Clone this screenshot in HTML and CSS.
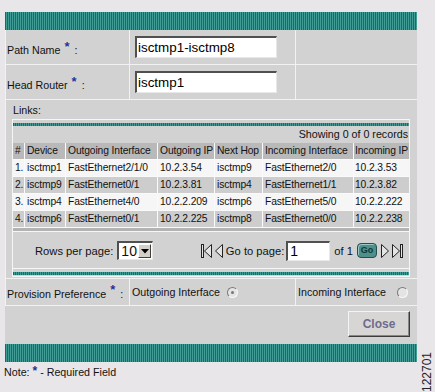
FILE: index.html
```html
<!DOCTYPE html>
<html>
  <head>
    <meta charset="utf-8" />
    <title>Path Details</title>
    <link rel="stylesheet" href="styles.css">
  </head>
  <body>
    <div id="page">
      <div class="panel">
        <div class="bar"></div>
        <div class="row field">
          <div class="label">Path Name<span class="req">*</span>:</div>
          <div class="value"><input type="text" value="isctmp1-isctmp8" /></div>
          <div></div>
        </div>
        <div class="row field">
          <div class="label">Head Router<span class="req">*</span>:</div>
          <div class="value"><input type="text" value="isctmp1" /></div>
          <div></div>
        </div>
        <div class="row links-row">
          <div class="links-label">Links:</div>
          <div class="links">
            <div class="bar thin"></div>
            <div class="records">Showing 0 of 0 records</div>
            <table class="grid">
              <colgroup>
                <col style="width:12px"><col style="width:41px"><col style="width:92px"><col style="width:57px"><col style="width:48px"><col style="width:91px"><col style="width:55px">
              </colgroup>
              <tr>
                <th>#</th><th>Device</th><th>Outgoing Interface</th><th>Outgoing IP</th><th>Next Hop</th><th>Incoming Interface</th><th>Incoming IP</th>
              </tr>
              <tr>
                <td>1.</td><td>isctmp1</td><td>FastEthernet2/1/0</td><td>10.2.3.54</td><td>isctmp9</td><td>FastEthernet2/0</td><td>10.2.3.53</td>
              </tr>
              <tr>
                <td>2.</td><td>isctmp9</td><td>FastEthernet0/1</td><td>10.2.3.81</td><td>isctmp4</td><td>FastEthernet1/1</td><td>10.2.3.82</td>
              </tr>
              <tr>
                <td>3.</td><td>isctmp4</td><td>FastEthernet4/0</td><td>10.2.2.209</td><td>isctmp6</td><td>FastEthernet5/0</td><td>10.2.2.222</td>
              </tr>
              <tr>
                <td>4.</td><td>isctmp6</td><td>FastEthernet0/1</td><td>10.2.2.225</td><td>isctmp8</td><td>FastEthernet0/0</td><td>10.2.2.238</td>
              </tr>
            </table>
            <div class="pager">
              <span class="rows-label">Rows per page:</span>
              <span class="select"><span class="select-value">10</span><span class="select-btn"><svg width="8" height="5" viewBox="0 0 8 5"><path d="M0 0 H8 L4 4.5 Z" fill="#000"/></svg></span></span>
              <span class="nav">
                <svg class="nav-icon" width="11" height="16" viewBox="0 0 11 16"><rect x="0.5" y="1.5" width="2" height="13" fill="#e4e4e4" stroke="#222"/><path d="M10.5 1.5 L3.5 8 L10.5 14.5 Z" fill="#e4e4e4" stroke="#222"/></svg>
                <svg class="nav-icon" width="8" height="16" viewBox="0 0 8 16"><path d="M7.5 1.5 L0.5 8 L7.5 14.5 Z" fill="#e4e4e4" stroke="#222"/></svg>
                <span class="goto">Go to page:</span>
                <input class="page-input" type="text" value="1" />
                <span class="of">of 1</span>
                <span class="go">Go</span>
                <svg class="nav-icon" width="8" height="16" viewBox="0 0 8 16"><path d="M0.5 1.5 L7.5 8 L0.5 14.5 Z" fill="#e4e4e4" stroke="#222"/></svg>
                <svg class="nav-icon" width="12" height="16" viewBox="0 0 12 16"><path d="M0.5 1.5 L7.5 8 L0.5 14.5 Z" fill="#e4e4e4" stroke="#222"/><rect x="8.5" y="1.5" width="2" height="13" fill="#e4e4e4" stroke="#222"/></svg>
              </span>
            </div>
            <div class="bar thin"></div>
          </div>
        </div>
        <div class="row field provision">
          <div class="label">Provision Preference<span class="req">*</span>:</div>
          <div class="choice">Outgoing Interface <span class="radio checked"></span></div>
          <div class="choice">Incoming Interface <span class="radio"></span></div>
        </div>
        <div class="row actions">
          <button class="close">Close</button>
        </div>
        <div class="bar"></div>
      </div>
      <p class="note">Note: <span class="note-req">*</span> - Required Field</p>
    </div>
    <div class="fig-id">122701</div>
  </body>
</html>
```

FILE: styles.css
```css
* {
  box-sizing: border-box;
}
body {
  margin: 0;
  height: 392px;
  overflow: hidden;
  position: relative;
  background-color: #e9e6e9;
  font-family: "Liberation Sans", Arial, sans-serif;
  font-size: 10.7px;
  color: #111;
}
#page {
  padding: 12px 0 0 5px;
}
.panel {
  width: 412px;
  background-color: #d2d2d2;
}
.bar {
  height: 18px;
  background: repeating-linear-gradient(90deg, #1a6a66 0 1px, #409c95 1px 2px);
}
.bar.thin {
  height: 3px;
}
.row {
  border-bottom: 1px solid #f2f2f2;
}
.field {
  display: grid;
  grid-template-columns: 124px 166px 122px;
  height: 35px;
}
.field > div {
  border-left: 1px solid #f2f2f2;
  display: flex;
  align-items: center;
}
.label {
  padding-left: 1px;
  padding-top: 6px;
}
.provision .label {
  padding-top: 3px;
}
.req {
  color: #1f2fa8;
  font-size: 13px;
  font-weight: bold;
  position: relative;
  top: -4px;
  margin: 0 5px 0 4px;
  text-shadow: 0 0 2px #f4f0b0;
}
.note-req {
  color: #1f2fa8;
  font-size: 12px;
  font-weight: bold;
  position: relative;
  top: -1px;
  text-shadow: 0 0 2px #f4f0b0;
}
.value {
  padding-left: 5px;
}
.value input {
  width: 142px;
  height: 22px;
  padding: 0 0 0 1px;
  font-family: "Liberation Sans", Arial, sans-serif;
  font-size: 13.4px;
  color: #000;
  background-color: #fff;
  border-top: 2px solid #505050;
  border-left: 2px solid #505050;
  border-right: 1px solid #e8e8e8;
  border-bottom: 1px solid #e8e8e8;
  outline: none;
}
.links-row {
  border-left: 1px solid #f2f2f2;
  padding: 0 7px 1px 6px;
}
.links-label {
  height: 19px;
  line-height: 20px;
  padding-left: 1px;
}
.links {
  border: 1px solid #f6f6f6;
  padding: 3px 0 1px;
}
.records {
  height: 17px;
  line-height: 17px;
  text-align: right;
  padding-right: 1px;
}
.grid {
  width: 396px;
  table-layout: fixed;
  border-collapse: separate;
  border-spacing: 0;
  border-bottom: 3px solid #b3b3b3;
  font-size: 10.3px;
  letter-spacing: -0.12px;
}
.grid th,
.grid td {
  height: 17px;
  padding: 0 0 0 2px;
  line-height: 16px;
  font-weight: normal;
  text-align: left;
  white-space: nowrap;
  overflow: hidden;
  border-right: 1px solid #fafafa;
  border-bottom: 1px solid #fafafa;
}
.grid th:last-child,
.grid td:last-child {
  padding-left: 1px;
  border-right: none;
}
.grid th {
  background-color: #b9b9b9;
}
.grid tr:nth-child(even) td {
  background-color: #f6f6f6;
}
.grid tr:nth-child(odd) td {
  background-color: #cdcdcd;
}
.pager {
  display: flex;
  align-items: center;
  height: 38px;
  border-top: 1px solid #f6f6f6;
  border-bottom: 1px solid #f6f6f6;
  margin-bottom: 3px;
  padding: 1px 5px 0 22px;
  font-size: 11.2px;
}
.select {
  display: flex;
  align-items: center;
  width: 36px;
  height: 19px;
  margin-left: 4px;
  background-color: #fff;
  border-top: 2px solid #505050;
  border-left: 2px solid #505050;
  border-right: 1px solid #e8e8e8;
  border-bottom: 1px solid #e8e8e8;
}
.select-value {
  font-size: 14px;
  width: 19px;
  padding-left: 2px;
}
.select-btn {
  display: flex;
  align-items: center;
  justify-content: center;
  width: 13px;
  height: 14px;
  background-color: #d4d0c8;
  border-top: 1px solid #fff;
  border-left: 1px solid #fff;
  border-right: 1px solid #404040;
  border-bottom: 1px solid #404040;
}
.nav {
  display: flex;
  align-items: center;
  margin-left: auto;
}
.nav-icon {
  display: block;
}
.nav-icon + .nav-icon {
  margin-left: 3px;
}
.goto {
  margin-left: 3px;
}
.page-input {
  width: 44px;
  height: 20px;
  margin-left: 2px;
  padding: 0 0 0 2px;
  font-family: "Liberation Sans", Arial, sans-serif;
  font-size: 14px;
  color: #000;
  background-color: #fff;
  border-top: 2px solid #505050;
  border-left: 2px solid #505050;
  border-right: 1px solid #e8e8e8;
  border-bottom: 1px solid #e8e8e8;
  outline: none;
}
.of {
  margin-left: 4px;
}
.go {
  margin: 0 4px 0 4px;
  width: 20px;
  height: 15px;
  line-height: 13px;
  text-align: center;
  font-size: 9px;
  font-weight: bold;
  color: #0c3a38;
  background-color: #4f8f8c;
  border: 1px solid #23504e;
  border-radius: 4px;
  box-shadow: inset 1px 1px 0 #9cc8c4;
}
.provision {
  height: 27px;
}
.choice {
  padding-left: 2px;
}
.radio {
  display: inline-block;
  width: 11px;
  height: 11px;
  margin-left: 7px;
  border-radius: 50%;
  background-color: #e4e4e4;
  border: 1px solid;
  border-color: #7a7a7a #f8f8f8 #f8f8f8 #7a7a7a;
  position: relative;
}
.choice:last-child .radio {
  margin-left: 11px;
}
.radio.checked::after {
  content: "";
  position: absolute;
  left: 3px;
  top: 3px;
  width: 3px;
  height: 3px;
  border-radius: 50%;
  background-color: #777;
}
.actions {
  display: flex;
  justify-content: flex-end;
  height: 38px;
  padding: 5px 7px 0 0;
  border-bottom: none;
}
.close {
  width: 62px;
  height: 26px;
  font-family: "Liberation Sans", Arial, sans-serif;
  font-size: 12px;
  font-weight: bold;
  color: #6c6c8c;
  background-color: #d8d6d4;
  border: 1px solid;
  border-color: #f4f4f4 #3c3c3c #3c3c3c #f4f4f4;
  box-shadow: inset -1px -1px 0 #888;
}
.note {
  margin: 3px 0 0 -1px;
  line-height: 14px;
}
.fig-id {
  position: absolute;
  left: 421px;
  top: 352px;
  width: 40px;
  height: 12px;
  font-size: 12px;
  line-height: 12px;
  color: #222;
  transform-origin: 0 0;
  transform: rotate(-90deg) translate(-40px, 0);
}
```
